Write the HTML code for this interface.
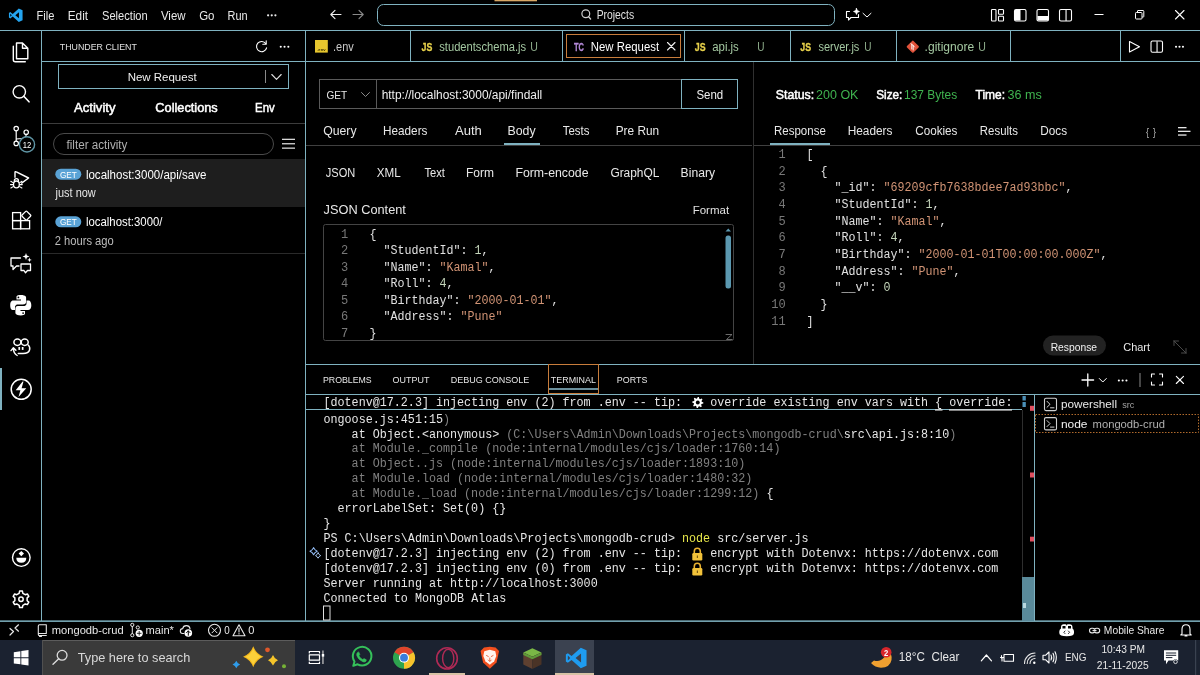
<!DOCTYPE html>
<html><head><meta charset="utf-8"><title>VS Code - Thunder Client</title>
<style>
html,body{margin:0;padding:0;background:#000;width:1200px;height:675px;overflow:hidden}
svg{display:block;will-change:transform}
.sans{font-family:"Liberation Sans",sans-serif}
.mono{font-family:"Liberation Mono",monospace}
text{white-space:pre}
</style></head><body>
<svg width="1200" height="675" viewBox="0 0 1200 675">
<rect x="0" y="0" width="1200" height="675" fill="#000"/>
<rect x="42" y="159" width="263" height="48" fill="#1e1e1e" />
<rect x="0" y="640" width="1200" height="35" fill="#1b2230" />
<rect x="42" y="640" width="253" height="35" fill="#3a3a3a" />
<rect x="42" y="640" width="253" height="1" fill="#5c5c5c" />
<rect x="42" y="640" width="1" height="35" fill="#505050" />
<rect x="555" y="640" width="39" height="35" fill="#3b4250" />
<rect x="429" y="673" width="36" height="2" fill="#d6c2a5" />
<rect x="555" y="673" width="39" height="2" fill="#d6c2a5" />
<rect x="0" y="30" width="1200" height="1" fill="#7fb2c0" />
<rect x="41" y="31" width="1" height="590" fill="#7fb2c0" />
<rect x="42" y="61" width="263" height="1" fill="#7fb2c0" />
<rect x="305" y="31" width="1" height="590" fill="#7fb2c0" />
<rect x="306" y="61" width="894" height="1" fill="#7fb2c0" />
<rect x="410" y="31" width="1" height="30" fill="#7fb2c0" />
<rect x="562" y="31" width="1" height="30" fill="#7fb2c0" />
<rect x="684" y="31" width="1" height="30" fill="#7fb2c0" />
<rect x="790" y="31" width="1" height="30" fill="#7fb2c0" />
<rect x="896" y="31" width="1" height="30" fill="#7fb2c0" />
<rect x="1010" y="31" width="1" height="30" fill="#7fb2c0" />
<rect x="1120" y="31" width="1" height="30" fill="#7fb2c0" />
<rect x="377.5" y="4.5" width="457" height="21" rx="6" fill="none" stroke="#7fb2c0" stroke-width="1" />
<rect x="0" y="620.4" width="1200" height="1.5" fill="#7fb2c0" />
<rect x="566.5" y="34.5" width="114" height="23" rx="0" fill="none" stroke="#c87d3c" stroke-width="1" />
<rect x="58.5" y="64.5" width="230" height="24" rx="0" fill="none" stroke="#7fb2c0" stroke-width="1" />
<rect x="265" y="70" width="1" height="13" fill="#8a8a8a" />
<rect x="42" y="123" width="263" height="1" fill="#3c3c3c" />
<rect x="53.5" y="133.5" width="220" height="21" rx="10.5" fill="none" stroke="#4a4a4a" stroke-width="1" />
<rect x="42" y="253" width="263" height="1" fill="#2a2a2a" />
<rect x="319.5" y="79.5" width="362" height="29" rx="0" fill="none" stroke="#5a5a5a" stroke-width="1" />
<rect x="376" y="80" width="1" height="28" fill="#5a5a5a" />
<rect x="681.5" y="79.5" width="56" height="29" rx="0" fill="none" stroke="#7fb2c0" stroke-width="1" />
<rect x="306" y="145" width="446" height="1" fill="#404040" />
<rect x="504" y="143" width="36" height="2" fill="#7fb2c0" />
<rect x="753" y="62" width="1" height="302" fill="#303030" />
<rect x="323.5" y="224.5" width="410" height="116" rx="2" fill="none" stroke="#444444" stroke-width="1" />
<rect x="725.5" y="235.5" width="5.5" height="53" fill="#5b98b0" rx="2.5"/>
<rect x="754" y="145" width="446" height="1" fill="#404040" />
<rect x="770" y="143" width="60" height="2" fill="#7fb2c0" />
<rect x="1043" y="335.5" width="63" height="20" fill="#222222" rx="10"/>
<rect x="306" y="364" width="894" height="1" fill="#7fb2c0" />
<rect x="306" y="394" width="894" height="1" fill="#7fb2c0" />
<rect x="548.5" y="364.5" width="50" height="29" rx="0" fill="none" stroke="#c87d3c" stroke-width="1" />
<rect x="549" y="388" width="49" height="2" fill="#6a8e9b" />
<rect x="306" y="409" width="716" height="1" fill="#7fb2c0" />
<rect x="1022" y="410" width="1" height="211" fill="#2e2e2e" />
<rect x="1034" y="394" width="1" height="227" fill="#7fb2c0" />
<rect x="1022" y="577" width="12" height="44" fill="#5a8a9a" />
<rect x="1035.5" y="414.5" width="163" height="18" fill="none" stroke="#b06a2c" stroke-width="1" stroke-dasharray="1.5 1.5"/>
<rect x="0" y="368" width="2" height="42" fill="#7fb2c0" />
<text x="36.59" y="19.60" font-size="12" fill="#e8e8e8" font-weight="400" class="sans" textLength="17.91" lengthAdjust="spacingAndGlyphs" >File</text>
<text x="67.78" y="19.60" font-size="12" fill="#e8e8e8" font-weight="400" class="sans" textLength="20.30" lengthAdjust="spacingAndGlyphs" >Edit</text>
<text x="102.00" y="19.60" font-size="12" fill="#e8e8e8" font-weight="400" class="sans" textLength="45.73" lengthAdjust="spacingAndGlyphs" >Selection</text>
<text x="160.95" y="19.60" font-size="12" fill="#e8e8e8" font-weight="400" class="sans" textLength="24.62" lengthAdjust="spacingAndGlyphs" >View</text>
<text x="199.17" y="19.60" font-size="12" fill="#e8e8e8" font-weight="400" class="sans" textLength="15.31" lengthAdjust="spacingAndGlyphs" >Go</text>
<text x="227.60" y="19.60" font-size="12" fill="#e8e8e8" font-weight="400" class="sans" textLength="20.11" lengthAdjust="spacingAndGlyphs" >Run</text>
<text x="596.65" y="19.20" font-size="12" fill="#e0e0e0" font-weight="400" class="sans" textLength="37.48" lengthAdjust="spacingAndGlyphs" >Projects</text>
<rect x="494.5" y="0" width="42.5" height="1.3" fill="#d9a867" />
<text x="333.00" y="50.80" font-size="12" fill="#c8c8c8" font-weight="400" class="sans" textLength="20.79" lengthAdjust="spacingAndGlyphs" >.env</text>
<text x="439.29" y="50.80" font-size="12" fill="#a4c8a1" font-weight="400" class="sans" textLength="86.81" lengthAdjust="spacingAndGlyphs" >studentschema.js</text>
<text x="530.18" y="50.80" font-size="12" fill="#8fae8c" font-weight="400" class="sans" textLength="7.63" lengthAdjust="spacingAndGlyphs" >U</text>
<text x="590.77" y="50.80" font-size="12" fill="#ffffff" font-weight="400" class="sans" textLength="68.32" lengthAdjust="spacingAndGlyphs" >New Request</text>
<text x="712.22" y="50.80" font-size="12" fill="#a4c8a1" font-weight="400" class="sans" textLength="26.60" lengthAdjust="spacingAndGlyphs" >api.js</text>
<text x="757.23" y="50.80" font-size="12" fill="#8fae8c" font-weight="400" class="sans" textLength="7.25" lengthAdjust="spacingAndGlyphs" >U</text>
<text x="818.40" y="50.80" font-size="12" fill="#a4c8a1" font-weight="400" class="sans" textLength="40.99" lengthAdjust="spacingAndGlyphs" >server.js</text>
<text x="864.23" y="50.80" font-size="12" fill="#8fae8c" font-weight="400" class="sans" textLength="7.25" lengthAdjust="spacingAndGlyphs" >U</text>
<text x="924.60" y="50.80" font-size="12" fill="#a4c8a1" font-weight="400" class="sans" textLength="49.64" lengthAdjust="spacingAndGlyphs" >.gitignore</text>
<text x="978.18" y="50.80" font-size="12" fill="#8fae8c" font-weight="400" class="sans" textLength="7.63" lengthAdjust="spacingAndGlyphs" >U</text>
<text x="59.80" y="50.10" font-size="9.8" fill="#e0e0e0" font-weight="400" class="sans" textLength="77.10" lengthAdjust="spacingAndGlyphs" >THUNDER CLIENT</text>
<text x="127.66" y="80.70" font-size="11.5" fill="#f0f0f0" font-weight="400" class="sans" textLength="68.93" lengthAdjust="spacingAndGlyphs" >New Request</text>
<text x="73.97" y="111.80" font-size="13" fill="#ffffff" font-weight="400" class="sans" textLength="41.55" lengthAdjust="spacingAndGlyphs"  stroke="#ffffff" stroke-width="0.5">Activity</text>
<text x="155.35" y="111.80" font-size="13" fill="#ffffff" font-weight="400" class="sans" textLength="62.41" lengthAdjust="spacingAndGlyphs"  stroke="#ffffff" stroke-width="0.5">Collections</text>
<text x="255.06" y="111.80" font-size="13" fill="#ffffff" font-weight="400" class="sans" textLength="19.68" lengthAdjust="spacingAndGlyphs"  stroke="#ffffff" stroke-width="0.5">Env</text>
<text x="66.53" y="148.60" font-size="12" fill="#b0b0b0" font-weight="400" class="sans" textLength="60.89" lengthAdjust="spacingAndGlyphs" >filter activity</text>
<text x="85.92" y="178.70" font-size="12" fill="#ffffff" font-weight="400" class="sans" textLength="120.39" lengthAdjust="spacingAndGlyphs" >localhost:3000/api/save</text>
<text x="55.57" y="197.00" font-size="12" fill="#e6e6e6" font-weight="400" class="sans" textLength="40.21" lengthAdjust="spacingAndGlyphs" >just now</text>
<text x="85.93" y="226.00" font-size="12" fill="#ffffff" font-weight="400" class="sans" textLength="76.57" lengthAdjust="spacingAndGlyphs" >localhost:3000/</text>
<text x="54.74" y="245.00" font-size="12" fill="#bdbdbd" font-weight="400" class="sans" textLength="59.03" lengthAdjust="spacingAndGlyphs" >2 hours ago</text>
<text x="326.49" y="99.40" font-size="11.5" fill="#e6e6e6" font-weight="400" class="sans" textLength="20.74" lengthAdjust="spacingAndGlyphs" >GET</text>
<text x="381.67" y="99.40" font-size="12" fill="#f0f0f0" font-weight="400" class="sans" textLength="160.63" lengthAdjust="spacingAndGlyphs" >http://localhost:3000/api/findall</text>
<text x="696.48" y="98.70" font-size="13" fill="#f0f0f0" font-weight="400" class="sans" textLength="26.76" lengthAdjust="spacingAndGlyphs" >Send</text>
<text x="323.17" y="135.25" font-size="13" fill="#e8e8e8" font-weight="400" class="sans" textLength="33.35" lengthAdjust="spacingAndGlyphs" >Query</text>
<text x="383.04" y="135.25" font-size="13" fill="#e8e8e8" font-weight="400" class="sans" textLength="44.39" lengthAdjust="spacingAndGlyphs" >Headers</text>
<text x="454.97" y="135.25" font-size="13" fill="#e8e8e8" font-weight="400" class="sans" textLength="26.87" lengthAdjust="spacingAndGlyphs" >Auth</text>
<text x="507.49" y="135.25" font-size="13" fill="#e8e8e8" font-weight="400" class="sans" textLength="28.14" lengthAdjust="spacingAndGlyphs" >Body</text>
<text x="562.76" y="135.25" font-size="13" fill="#e8e8e8" font-weight="400" class="sans" textLength="26.64" lengthAdjust="spacingAndGlyphs" >Tests</text>
<text x="615.73" y="135.25" font-size="13" fill="#e8e8e8" font-weight="400" class="sans" textLength="43.34" lengthAdjust="spacingAndGlyphs" >Pre Run</text>
<text x="325.83" y="177.00" font-size="12.5" fill="#e8e8e8" font-weight="400" class="sans" textLength="29.47" lengthAdjust="spacingAndGlyphs" >JSON</text>
<text x="376.74" y="177.00" font-size="12.5" fill="#e8e8e8" font-weight="400" class="sans" textLength="23.95" lengthAdjust="spacingAndGlyphs" >XML</text>
<text x="424.46" y="177.00" font-size="12.5" fill="#e8e8e8" font-weight="400" class="sans" textLength="20.51" lengthAdjust="spacingAndGlyphs" >Text</text>
<text x="465.92" y="177.00" font-size="12.5" fill="#e8e8e8" font-weight="400" class="sans" textLength="27.97" lengthAdjust="spacingAndGlyphs" >Form</text>
<text x="515.39" y="177.00" font-size="12.5" fill="#e8e8e8" font-weight="400" class="sans" textLength="73.16" lengthAdjust="spacingAndGlyphs" >Form-encode</text>
<text x="610.40" y="177.00" font-size="12.5" fill="#e8e8e8" font-weight="400" class="sans" textLength="48.99" lengthAdjust="spacingAndGlyphs" >GraphQL</text>
<text x="680.60" y="177.00" font-size="12.5" fill="#e8e8e8" font-weight="400" class="sans" textLength="34.42" lengthAdjust="spacingAndGlyphs" >Binary</text>
<text x="323.60" y="213.90" font-size="13.5" fill="#e8e8e8" font-weight="400" class="sans" textLength="82.29" lengthAdjust="spacingAndGlyphs" >JSON Content</text>
<text x="692.66" y="214.40" font-size="11" fill="#e0e0e0" font-weight="400" class="sans" textLength="36.43" lengthAdjust="spacingAndGlyphs" >Format</text>
<text x="775.74" y="99.20" font-size="12.5" fill="#ffffff" font-weight="400" class="sans" textLength="38.39" lengthAdjust="spacingAndGlyphs"  stroke="#ffffff" stroke-width="0.5">Status:</text>
<text x="816.07" y="99.20" font-size="12.5" fill="#3fb34f" font-weight="400" class="sans" textLength="42.37" lengthAdjust="spacingAndGlyphs" >200 OK</text>
<text x="876.16" y="99.20" font-size="12.5" fill="#ffffff" font-weight="400" class="sans" textLength="26.21" lengthAdjust="spacingAndGlyphs"  stroke="#ffffff" stroke-width="0.5">Size:</text>
<text x="904.09" y="99.20" font-size="12.5" fill="#3fb34f" font-weight="400" class="sans" textLength="53.04" lengthAdjust="spacingAndGlyphs" >137 Bytes</text>
<text x="975.53" y="99.20" font-size="12.5" fill="#ffffff" font-weight="400" class="sans" textLength="29.54" lengthAdjust="spacingAndGlyphs"  stroke="#ffffff" stroke-width="0.5">Time:</text>
<text x="1007.52" y="99.20" font-size="12.5" fill="#3fb34f" font-weight="400" class="sans" textLength="34.23" lengthAdjust="spacingAndGlyphs" >36 ms</text>
<text x="774.06" y="135.30" font-size="12.5" fill="#e8e8e8" font-weight="400" class="sans" textLength="51.75" lengthAdjust="spacingAndGlyphs" >Response</text>
<text x="847.73" y="135.30" font-size="12.5" fill="#e8e8e8" font-weight="400" class="sans" textLength="44.70" lengthAdjust="spacingAndGlyphs" >Headers</text>
<text x="915.21" y="135.30" font-size="12.5" fill="#e8e8e8" font-weight="400" class="sans" textLength="42.22" lengthAdjust="spacingAndGlyphs" >Cookies</text>
<text x="979.86" y="135.30" font-size="12.5" fill="#e8e8e8" font-weight="400" class="sans" textLength="38.05" lengthAdjust="spacingAndGlyphs" >Results</text>
<text x="1040.34" y="135.30" font-size="12.5" fill="#e8e8e8" font-weight="400" class="sans" textLength="26.79" lengthAdjust="spacingAndGlyphs" >Docs</text>
<text x="1050.65" y="350.80" font-size="11.8" fill="#f0f0f0" font-weight="400" class="sans" textLength="46.40" lengthAdjust="spacingAndGlyphs" >Response</text>
<text x="1123.24" y="350.80" font-size="11.8" fill="#e8e8e8" font-weight="400" class="sans" textLength="26.84" lengthAdjust="spacingAndGlyphs" >Chart</text>
<text x="348.3" y="237.50" font-size="12" fill="#787878" class="mono" text-anchor="end">1</text>
<text x="369.40" y="237.50" font-size="12" fill="#e0e0e0" class="mono" textLength="7.00" lengthAdjust="spacingAndGlyphs">{</text>
<text x="348.3" y="254.05" font-size="12" fill="#787878" class="mono" text-anchor="end">2</text>
<text x="383.40" y="254.05" font-size="12" fill="#e0e0e0" class="mono" textLength="77.00" lengthAdjust="spacingAndGlyphs">"StudentId"</text>
<text x="460.40" y="254.05" font-size="12" fill="#e0e0e0" class="mono" textLength="7.00" lengthAdjust="spacingAndGlyphs">:</text>
<text x="474.40" y="254.05" font-size="12" fill="#c5d6bb" class="mono" textLength="7.00" lengthAdjust="spacingAndGlyphs">1</text>
<text x="481.40" y="254.05" font-size="12" fill="#e0e0e0" class="mono" textLength="7.00" lengthAdjust="spacingAndGlyphs">,</text>
<text x="348.3" y="270.60" font-size="12" fill="#787878" class="mono" text-anchor="end">3</text>
<text x="383.40" y="270.60" font-size="12" fill="#e0e0e0" class="mono" textLength="42.00" lengthAdjust="spacingAndGlyphs">"Name"</text>
<text x="425.40" y="270.60" font-size="12" fill="#e0e0e0" class="mono" textLength="7.00" lengthAdjust="spacingAndGlyphs">:</text>
<text x="439.40" y="270.60" font-size="12" fill="#d29475" class="mono" textLength="49.00" lengthAdjust="spacingAndGlyphs">"Kamal"</text>
<text x="488.40" y="270.60" font-size="12" fill="#e0e0e0" class="mono" textLength="7.00" lengthAdjust="spacingAndGlyphs">,</text>
<text x="348.3" y="287.15" font-size="12" fill="#787878" class="mono" text-anchor="end">4</text>
<text x="383.40" y="287.15" font-size="12" fill="#e0e0e0" class="mono" textLength="42.00" lengthAdjust="spacingAndGlyphs">"Roll"</text>
<text x="425.40" y="287.15" font-size="12" fill="#e0e0e0" class="mono" textLength="7.00" lengthAdjust="spacingAndGlyphs">:</text>
<text x="439.40" y="287.15" font-size="12" fill="#c5d6bb" class="mono" textLength="7.00" lengthAdjust="spacingAndGlyphs">4</text>
<text x="446.40" y="287.15" font-size="12" fill="#e0e0e0" class="mono" textLength="7.00" lengthAdjust="spacingAndGlyphs">,</text>
<text x="348.3" y="303.70" font-size="12" fill="#787878" class="mono" text-anchor="end">5</text>
<text x="383.40" y="303.70" font-size="12" fill="#e0e0e0" class="mono" textLength="70.00" lengthAdjust="spacingAndGlyphs">"Birthday"</text>
<text x="453.40" y="303.70" font-size="12" fill="#e0e0e0" class="mono" textLength="7.00" lengthAdjust="spacingAndGlyphs">:</text>
<text x="467.40" y="303.70" font-size="12" fill="#d29475" class="mono" textLength="84.00" lengthAdjust="spacingAndGlyphs">"2000-01-01"</text>
<text x="551.40" y="303.70" font-size="12" fill="#e0e0e0" class="mono" textLength="7.00" lengthAdjust="spacingAndGlyphs">,</text>
<text x="348.3" y="320.25" font-size="12" fill="#787878" class="mono" text-anchor="end">6</text>
<text x="383.40" y="320.25" font-size="12" fill="#e0e0e0" class="mono" textLength="63.00" lengthAdjust="spacingAndGlyphs">"Address"</text>
<text x="446.40" y="320.25" font-size="12" fill="#e0e0e0" class="mono" textLength="7.00" lengthAdjust="spacingAndGlyphs">:</text>
<text x="460.40" y="320.25" font-size="12" fill="#d29475" class="mono" textLength="42.00" lengthAdjust="spacingAndGlyphs">"Pune"</text>
<text x="348.3" y="336.80" font-size="12" fill="#787878" class="mono" text-anchor="end">7</text>
<text x="369.40" y="336.80" font-size="12" fill="#e0e0e0" class="mono" textLength="7.00" lengthAdjust="spacingAndGlyphs">}</text>
<text x="785.7" y="158.00" font-size="12" fill="#787878" class="mono" text-anchor="end">1</text>
<text x="806.50" y="158.00" font-size="12" fill="#e0e0e0" class="mono" textLength="7.00" lengthAdjust="spacingAndGlyphs">[</text>
<text x="785.7" y="174.67" font-size="12" fill="#787878" class="mono" text-anchor="end">2</text>
<text x="820.50" y="174.67" font-size="12" fill="#e0e0e0" class="mono" textLength="7.00" lengthAdjust="spacingAndGlyphs">{</text>
<text x="785.7" y="191.34" font-size="12" fill="#787878" class="mono" text-anchor="end">3</text>
<text x="834.50" y="191.34" font-size="12" fill="#e0e0e0" class="mono" textLength="35.00" lengthAdjust="spacingAndGlyphs">"_id"</text>
<text x="869.50" y="191.34" font-size="12" fill="#e0e0e0" class="mono" textLength="7.00" lengthAdjust="spacingAndGlyphs">:</text>
<text x="883.50" y="191.34" font-size="12" fill="#d29475" class="mono" textLength="182.00" lengthAdjust="spacingAndGlyphs">"69209cfb7638bdee7ad93bbc"</text>
<text x="1065.50" y="191.34" font-size="12" fill="#e0e0e0" class="mono" textLength="7.00" lengthAdjust="spacingAndGlyphs">,</text>
<text x="785.7" y="208.01" font-size="12" fill="#787878" class="mono" text-anchor="end">4</text>
<text x="834.50" y="208.01" font-size="12" fill="#e0e0e0" class="mono" textLength="77.00" lengthAdjust="spacingAndGlyphs">"StudentId"</text>
<text x="911.50" y="208.01" font-size="12" fill="#e0e0e0" class="mono" textLength="7.00" lengthAdjust="spacingAndGlyphs">:</text>
<text x="925.50" y="208.01" font-size="12" fill="#c5d6bb" class="mono" textLength="7.00" lengthAdjust="spacingAndGlyphs">1</text>
<text x="932.50" y="208.01" font-size="12" fill="#e0e0e0" class="mono" textLength="7.00" lengthAdjust="spacingAndGlyphs">,</text>
<text x="785.7" y="224.68" font-size="12" fill="#787878" class="mono" text-anchor="end">5</text>
<text x="834.50" y="224.68" font-size="12" fill="#e0e0e0" class="mono" textLength="42.00" lengthAdjust="spacingAndGlyphs">"Name"</text>
<text x="876.50" y="224.68" font-size="12" fill="#e0e0e0" class="mono" textLength="7.00" lengthAdjust="spacingAndGlyphs">:</text>
<text x="890.50" y="224.68" font-size="12" fill="#d29475" class="mono" textLength="49.00" lengthAdjust="spacingAndGlyphs">"Kamal"</text>
<text x="939.50" y="224.68" font-size="12" fill="#e0e0e0" class="mono" textLength="7.00" lengthAdjust="spacingAndGlyphs">,</text>
<text x="785.7" y="241.35" font-size="12" fill="#787878" class="mono" text-anchor="end">6</text>
<text x="834.50" y="241.35" font-size="12" fill="#e0e0e0" class="mono" textLength="42.00" lengthAdjust="spacingAndGlyphs">"Roll"</text>
<text x="876.50" y="241.35" font-size="12" fill="#e0e0e0" class="mono" textLength="7.00" lengthAdjust="spacingAndGlyphs">:</text>
<text x="890.50" y="241.35" font-size="12" fill="#c5d6bb" class="mono" textLength="7.00" lengthAdjust="spacingAndGlyphs">4</text>
<text x="897.50" y="241.35" font-size="12" fill="#e0e0e0" class="mono" textLength="7.00" lengthAdjust="spacingAndGlyphs">,</text>
<text x="785.7" y="258.02" font-size="12" fill="#787878" class="mono" text-anchor="end">7</text>
<text x="834.50" y="258.02" font-size="12" fill="#e0e0e0" class="mono" textLength="70.00" lengthAdjust="spacingAndGlyphs">"Birthday"</text>
<text x="904.50" y="258.02" font-size="12" fill="#e0e0e0" class="mono" textLength="7.00" lengthAdjust="spacingAndGlyphs">:</text>
<text x="918.50" y="258.02" font-size="12" fill="#d29475" class="mono" textLength="182.00" lengthAdjust="spacingAndGlyphs">"2000-01-01T00:00:00.000Z"</text>
<text x="1100.50" y="258.02" font-size="12" fill="#e0e0e0" class="mono" textLength="7.00" lengthAdjust="spacingAndGlyphs">,</text>
<text x="785.7" y="274.69" font-size="12" fill="#787878" class="mono" text-anchor="end">8</text>
<text x="834.50" y="274.69" font-size="12" fill="#e0e0e0" class="mono" textLength="63.00" lengthAdjust="spacingAndGlyphs">"Address"</text>
<text x="897.50" y="274.69" font-size="12" fill="#e0e0e0" class="mono" textLength="7.00" lengthAdjust="spacingAndGlyphs">:</text>
<text x="911.50" y="274.69" font-size="12" fill="#d29475" class="mono" textLength="42.00" lengthAdjust="spacingAndGlyphs">"Pune"</text>
<text x="953.50" y="274.69" font-size="12" fill="#e0e0e0" class="mono" textLength="7.00" lengthAdjust="spacingAndGlyphs">,</text>
<text x="785.7" y="291.36" font-size="12" fill="#787878" class="mono" text-anchor="end">9</text>
<text x="834.50" y="291.36" font-size="12" fill="#e0e0e0" class="mono" textLength="35.00" lengthAdjust="spacingAndGlyphs">"__v"</text>
<text x="869.50" y="291.36" font-size="12" fill="#e0e0e0" class="mono" textLength="7.00" lengthAdjust="spacingAndGlyphs">:</text>
<text x="883.50" y="291.36" font-size="12" fill="#c5d6bb" class="mono" textLength="7.00" lengthAdjust="spacingAndGlyphs">0</text>
<text x="785.7" y="308.03" font-size="12" fill="#787878" class="mono" text-anchor="end">10</text>
<text x="820.50" y="308.03" font-size="12" fill="#e0e0e0" class="mono" textLength="7.00" lengthAdjust="spacingAndGlyphs">}</text>
<text x="785.7" y="324.70" font-size="12" fill="#787878" class="mono" text-anchor="end">11</text>
<text x="806.50" y="324.70" font-size="12" fill="#e0e0e0" class="mono" textLength="7.00" lengthAdjust="spacingAndGlyphs">]</text>
<text x="322.98" y="383.00" font-size="9.8" fill="#e6e6e6" font-weight="400" class="sans" textLength="48.72" lengthAdjust="spacingAndGlyphs" >PROBLEMS</text>
<text x="392.58" y="383.00" font-size="9.8" fill="#e6e6e6" font-weight="400" class="sans" textLength="36.83" lengthAdjust="spacingAndGlyphs" >OUTPUT</text>
<text x="450.86" y="383.00" font-size="9.8" fill="#e6e6e6" font-weight="400" class="sans" textLength="78.53" lengthAdjust="spacingAndGlyphs" >DEBUG CONSOLE</text>
<text x="550.80" y="383.00" font-size="9.8" fill="#e6e6e6" font-weight="400" class="sans" textLength="45.10" lengthAdjust="spacingAndGlyphs" >TERMINAL</text>
<text x="616.87" y="383.00" font-size="9.8" fill="#e6e6e6" font-weight="400" class="sans" textLength="30.53" lengthAdjust="spacingAndGlyphs" >PORTS</text>
<text x="323.50" y="406.00" font-size="12" fill="#e6e6e6" class="mono" textLength="358.53" lengthAdjust="spacingAndGlyphs">[dotenv@17.2.3] injecting env (2) from .env -- tip:</text>
<text x="710.15" y="406.00" font-size="12" fill="#e6e6e6" class="mono" textLength="302.29" lengthAdjust="spacingAndGlyphs">override existing env vars with { override:</text>
<rect x="935" y="409.2" width="7.5" height="1.4" fill="#d8d8d8" />
<rect x="949" y="409.2" width="63" height="1.4" fill="#d8d8d8" />
<text x="323.50" y="422.60" font-size="12" fill="#e6e6e6" class="mono" textLength="119.51" lengthAdjust="spacingAndGlyphs">ongoose.js:451:15</text>
<text x="443.01" y="422.60" font-size="12" fill="#808080" class="mono" textLength="7.03" lengthAdjust="spacingAndGlyphs">)</text>
<text x="351.62" y="437.52" font-size="12" fill="#e6e6e6" class="mono" textLength="147.63" lengthAdjust="spacingAndGlyphs">at Object.&lt;anonymous&gt;</text>
<text x="506.28" y="437.52" font-size="12" fill="#808080" class="mono" textLength="337.44" lengthAdjust="spacingAndGlyphs">(C:\Users\Admin\Downloads\Projects\mongodb-crud\</text>
<text x="843.72" y="437.52" font-size="12" fill="#e6e6e6" class="mono" textLength="105.45" lengthAdjust="spacingAndGlyphs">src\api.js:8:10</text>
<text x="949.17" y="437.52" font-size="12" fill="#808080" class="mono" textLength="7.03" lengthAdjust="spacingAndGlyphs">)</text>
<text x="351.62" y="452.44" font-size="12" fill="#808080" class="mono" textLength="428.83" lengthAdjust="spacingAndGlyphs">at Module._compile (node:internal/modules/cjs/loader:1760:14)</text>
<text x="351.62" y="467.36" font-size="12" fill="#808080" class="mono" textLength="393.68" lengthAdjust="spacingAndGlyphs">at Object..js (node:internal/modules/cjs/loader:1893:10)</text>
<text x="351.62" y="482.28" font-size="12" fill="#808080" class="mono" textLength="400.71" lengthAdjust="spacingAndGlyphs">at Module.load (node:internal/modules/cjs/loader:1480:32)</text>
<text x="351.62" y="497.20" font-size="12" fill="#808080" class="mono" textLength="407.74" lengthAdjust="spacingAndGlyphs">at Module._load (node:internal/modules/cjs/loader:1299:12)</text>
<text x="766.39" y="497.20" font-size="12" fill="#e6e6e6" class="mono" textLength="7.03" lengthAdjust="spacingAndGlyphs">{</text>
<text x="337.56" y="512.12" font-size="12" fill="#e6e6e6" class="mono" textLength="168.72" lengthAdjust="spacingAndGlyphs">errorLabelSet: Set(0) {}</text>
<text x="323.50" y="527.04" font-size="12" fill="#e6e6e6" class="mono" textLength="7.03" lengthAdjust="spacingAndGlyphs">}</text>
<text x="323.50" y="541.96" font-size="12" fill="#e6e6e6" class="mono" textLength="351.50" lengthAdjust="spacingAndGlyphs">PS C:\Users\Admin\Downloads\Projects\mongodb-crud&gt;</text>
<text x="682.03" y="541.96" font-size="12" fill="#e8e84a" class="mono" textLength="28.12" lengthAdjust="spacingAndGlyphs">node</text>
<text x="717.18" y="541.96" font-size="12" fill="#e6e6e6" class="mono" textLength="91.39" lengthAdjust="spacingAndGlyphs">src/server.js</text>
<text x="323.50" y="556.88" font-size="12" fill="#e6e6e6" class="mono" textLength="358.53" lengthAdjust="spacingAndGlyphs">[dotenv@17.2.3] injecting env (2) from .env -- tip:</text>
<text x="710.15" y="556.88" font-size="12" fill="#e6e6e6" class="mono" textLength="288.23" lengthAdjust="spacingAndGlyphs">encrypt with Dotenvx: https://dotenvx.com</text>
<text x="323.50" y="571.80" font-size="12" fill="#e6e6e6" class="mono" textLength="358.53" lengthAdjust="spacingAndGlyphs">[dotenv@17.2.3] injecting env (0) from .env -- tip:</text>
<text x="710.15" y="571.80" font-size="12" fill="#e6e6e6" class="mono" textLength="288.23" lengthAdjust="spacingAndGlyphs">encrypt with Dotenvx: https://dotenvx.com</text>
<text x="323.50" y="586.72" font-size="12" fill="#e6e6e6" class="mono" textLength="274.17" lengthAdjust="spacingAndGlyphs">Server running at http://localhost:3000</text>
<text x="323.50" y="601.64" font-size="12" fill="#e6e6e6" class="mono" textLength="182.78" lengthAdjust="spacingAndGlyphs">Connected to MongoDB Atlas</text>
<rect x="323.5" y="606" width="6.5" height="14" rx="0" fill="none" stroke="#e0e0e0" stroke-width="1" />
<text x="1060.94" y="408.30" font-size="11.5" fill="#e8e8e8" font-weight="400" class="sans" textLength="56.14" lengthAdjust="spacingAndGlyphs" >powershell</text>
<text x="1122.25" y="408.30" font-size="9.5" fill="#a0a0a0" font-weight="400" class="sans" textLength="12.20" lengthAdjust="spacingAndGlyphs" >src</text>
<text x="1060.91" y="427.60" font-size="11.5" fill="#f0f0f0" font-weight="400" class="sans" textLength="26.63" lengthAdjust="spacingAndGlyphs" >node</text>
<text x="1092.55" y="427.60" font-size="10.5" fill="#b0b0b0" font-weight="400" class="sans" textLength="72.37" lengthAdjust="spacingAndGlyphs" >mongodb-crud</text>
<text x="51.76" y="633.75" font-size="10.5" fill="#e8e8e8" font-weight="400" class="sans" textLength="71.96" lengthAdjust="spacingAndGlyphs" >mongodb-crud</text>
<text x="145.51" y="633.75" font-size="10.5" fill="#e8e8e8" font-weight="400" class="sans" textLength="28.41" lengthAdjust="spacingAndGlyphs" >main*</text>
<text x="224.37" y="633.75" font-size="10.5" fill="#e8e8e8" font-weight="400" class="sans" textLength="5.47" lengthAdjust="spacingAndGlyphs" >0</text>
<text x="248.32" y="633.75" font-size="10.5" fill="#e8e8e8" font-weight="400" class="sans" textLength="6.17" lengthAdjust="spacingAndGlyphs" >0</text>
<text x="1103.86" y="633.70" font-size="10.8" fill="#e8e8e8" font-weight="400" class="sans" textLength="60.60" lengthAdjust="spacingAndGlyphs" >Mobile Share</text>
<text x="77.72" y="661.75" font-size="12.7" fill="#d8d8d8" font-weight="400" class="sans" textLength="112.51" lengthAdjust="spacingAndGlyphs" >Type here to search</text>
<text x="898.81" y="661.40" font-size="12.3" fill="#e8e8e8" font-weight="400" class="sans" textLength="26.03" lengthAdjust="spacingAndGlyphs" >18°C</text>
<text x="931.61" y="661.40" font-size="12.3" fill="#e8e8e8" font-weight="400" class="sans" textLength="27.78" lengthAdjust="spacingAndGlyphs" >Clear</text>
<text x="1064.88" y="660.80" font-size="10.8" fill="#e8e8e8" font-weight="400" class="sans" textLength="21.56" lengthAdjust="spacingAndGlyphs" >ENG</text>
<text x="1101.43" y="653.00" font-size="10.9" fill="#e8e8e8" font-weight="400" class="sans" textLength="43.51" lengthAdjust="spacingAndGlyphs" >10:43 PM</text>
<text x="1096.69" y="668.70" font-size="10.9" fill="#e8e8e8" font-weight="400" class="sans" textLength="51.94" lengthAdjust="spacingAndGlyphs" >21-11-2025</text>
<circle cx="268.1" cy="15.3" r="1.1" fill="#e8e8e8" stroke="none" stroke-width="1"/>
<circle cx="271.75" cy="15.3" r="1.1" fill="#e8e8e8" stroke="none" stroke-width="1"/>
<circle cx="275.40000000000003" cy="15.3" r="1.1" fill="#e8e8e8" stroke="none" stroke-width="1"/>
<g transform="translate(8.5,8) scale(0.145)"><path fill="#24a4ef" fill-rule="evenodd" d="M71 3 L97 15 V85 L71 97 L29 59 L12 72 L3 66 V34 L12 28 L29 41 Z M72 29 L47 50 L72 71 Z M12 39 V61 L23 50 Z"/></g>
<path d="M341 14.5 H330.8 M335 10.3 L330.8 14.5 L335 18.7" fill="none" stroke="#f0f0f0" stroke-width="1.1" stroke-linecap="round" stroke-linejoin="round" />
<path d="M353 14.5 H363.2 M359 10.3 L363.2 14.5 L359 18.7" fill="none" stroke="#8a8a8a" stroke-width="1.1" stroke-linecap="round" stroke-linejoin="round" />
<circle cx="585.8" cy="13.8" r="3.9" fill="none" stroke="#d0d0d0" stroke-width="1.2"/>
<path d="M588.6 16.8 L590.6 19" fill="none" stroke="#d0d0d0" stroke-width="1.3" stroke-linecap="round" stroke-linejoin="round" />
<path d="M849.5 11.5 H846.5 V17.5 H848.5 V20 L851 17.5 H858.5 V14.5" fill="none" stroke="#ffffff" stroke-width="1.1" stroke-linecap="round" stroke-linejoin="round" />
<path d="M856.5 8.6 L857.3 10.7 L859.4 11.5 L857.3 12.3 L856.5 14.4 L855.7 12.3 L853.6 11.5 L855.7 10.7 Z" fill="#ffffff" stroke="#ffffff" stroke-width="0.9" stroke-linecap="round" stroke-linejoin="round" />
<path d="M863 13.3 L867 17 L871 13.3" fill="none" stroke="#ffffff" stroke-width="1.0" stroke-linecap="round" stroke-linejoin="round" />
<rect x="991.5" y="9.5" width="4.5" height="11.5" rx="0.8" fill="none" stroke="#ffffff" stroke-width="1.1" />
<rect x="998.5" y="9.5" width="5" height="4.8" rx="0.8" fill="none" stroke="#ffffff" stroke-width="1.1" />
<rect x="998.5" y="16.2" width="5" height="4.8" rx="0.8" fill="none" stroke="#ffffff" stroke-width="1.1" />
<rect x="1014.5" y="9.5" width="11.5" height="11.5" rx="1.5" fill="none" stroke="#ffffff" stroke-width="1.1" />
<rect x="1015" y="10" width="5.5" height="10.5" fill="#ffffff" />
<rect x="1037" y="9.5" width="11.5" height="11.5" rx="1.5" fill="none" stroke="#ffffff" stroke-width="1.1" />
<rect x="1037.5" y="16" width="10.5" height="4.5" fill="#ffffff" />
<rect x="1059.5" y="9.5" width="12" height="11.5" rx="1.5" fill="none" stroke="#ffffff" stroke-width="1.1" />
<rect x="1065.5" y="10" width="1.1" height="11" fill="#ffffff" />
<rect x="1094.5" y="14" width="9.0" height="1" fill="#ffffff" />
<rect x="1135.5" y="12.5" width="6.5" height="6.5" rx="0.8" fill="none" stroke="#ffffff" stroke-width="1" />
<path d="M1137.5 12 V11 Q1137.5 10.5 1138 10.5 H1143 Q1143.8 10.5 1143.8 11.3 V16.5 Q1143.8 17 1143.3 17 H1142.5" fill="none" stroke="#ffffff" stroke-width="1" stroke-linecap="round" stroke-linejoin="round" />
<path d="M1175.5 10.5 L1184 19 M1184 10.5 L1175.5 19" fill="none" stroke="#ffffff" stroke-width="1.1" stroke-linecap="round" stroke-linejoin="round" />
<rect x="315" y="40" width="12.8" height="12.6" fill="#e6c62e" />
<text x="317.2" y="51.2" font-size="4.2" fill="#3a3000" class="sans" font-weight="700">.env</text>
<text x="421.57" y="50.50" font-size="10.6" fill="#e5cf4a" font-weight="700" class="sans" textLength="10.78" lengthAdjust="spacingAndGlyphs"  stroke="#e5cf4a" stroke-width="0.3">JS</text>
<text x="694.87" y="50.50" font-size="10.6" fill="#e5cf4a" font-weight="700" class="sans" textLength="10.78" lengthAdjust="spacingAndGlyphs"  stroke="#e5cf4a" stroke-width="0.3">JS</text>
<text x="800.27" y="50.50" font-size="10.6" fill="#e5cf4a" font-weight="700" class="sans" textLength="10.78" lengthAdjust="spacingAndGlyphs"  stroke="#e5cf4a" stroke-width="0.3">JS</text>
<text x="573.92" y="50.50" font-size="10.6" fill="#b48ad8" font-weight="700" class="sans" textLength="9.99" lengthAdjust="spacingAndGlyphs"  stroke="#b48ad8" stroke-width="0.3">TC</text>
<path d="M667.5 42.5 L675 50 M675 42.5 L667.5 50" fill="none" stroke="#f0f0f0" stroke-width="1.1" stroke-linecap="round" stroke-linejoin="round" />
<g transform="translate(912.8,46.7) rotate(45)"><rect x="-4.6" y="-4.6" width="9.2" height="9.2" rx="1" fill="#e0523a"/></g>
<path d="M911 43.5 L914.5 47 M913.2 45.5 V50 M911.8 44.3 V49" fill="none" stroke="#ffffff" stroke-width="0.9" stroke-linecap="round" stroke-linejoin="round" />
<path d="M1129.5 41.5 V52 L1139.5 46.7 Z" fill="none" stroke="#ffffff" stroke-width="1.1" stroke-linecap="round" stroke-linejoin="round" />
<rect x="1151" y="41" width="11.5" height="11.2" rx="1.5" fill="none" stroke="#ffffff" stroke-width="1.1" />
<rect x="1156.5" y="41.3" width="1.1" height="10.700000000000003" fill="#ffffff" />
<circle cx="1176.05" cy="46.7" r="1.05" fill="#ffffff" stroke="none" stroke-width="1"/>
<circle cx="1179.5" cy="46.7" r="1.05" fill="#ffffff" stroke="none" stroke-width="1"/>
<circle cx="1182.95" cy="46.7" r="1.05" fill="#ffffff" stroke="none" stroke-width="1"/>
<path d="M265.8 43.6 A5.1 5.1 0 1 0 266.6 47.8" fill="none" stroke="#ffffff" stroke-width="1.1" stroke-linecap="round" stroke-linejoin="round" />
<path d="M266.2 40.8 V44.2 H262.8" fill="none" stroke="#ffffff" stroke-width="1.1" stroke-linecap="round" stroke-linejoin="round" />
<circle cx="280.75" cy="46.8" r="1.05" fill="#ffffff" stroke="none" stroke-width="1"/>
<circle cx="284.55" cy="46.8" r="1.05" fill="#ffffff" stroke="none" stroke-width="1"/>
<circle cx="288.34999999999997" cy="46.8" r="1.05" fill="#ffffff" stroke="none" stroke-width="1"/>
<path d="M271.8 74.5 L276.5 79.3 L281.2 74.5" fill="none" stroke="#e0e0e0" stroke-width="1.1" stroke-linecap="round" stroke-linejoin="round" />
<rect x="282" y="138.70000000000002" width="13" height="1.3" fill="#d8d8d8" />
<rect x="282" y="143.1" width="13" height="1.3" fill="#d8d8d8" />
<rect x="282" y="147.5" width="13" height="1.3" fill="#d8d8d8" />
<rect x="55.3" y="168.7" width="26" height="11" fill="#5aa3d6" rx="5.5"/>
<text x="59.89" y="177.60" font-size="9" fill="#ffffff" font-weight="400" class="sans" textLength="16.80" lengthAdjust="spacingAndGlyphs" >GET</text>
<rect x="55.3" y="216.3" width="26" height="11" fill="#5aa3d6" rx="5.5"/>
<text x="59.89" y="225.20" font-size="9" fill="#ffffff" font-weight="400" class="sans" textLength="16.80" lengthAdjust="spacingAndGlyphs" >GET</text>
<path d="M361.5 92.5 L365.5 96.5 L369.5 92.5" fill="none" stroke="#8a8a8a" stroke-width="1.0" stroke-linecap="round" stroke-linejoin="round" />
<text x="1145.76" y="136.00" font-size="11" fill="#e0e0e0" font-weight="400" class="mono" textLength="10.38" lengthAdjust="spacingAndGlyphs" >{ }</text>
<rect x="1178" y="127" width="8.5" height="1.3" fill="#e6e6e6" />
<rect x="1178" y="130.7" width="12.5" height="1.3" fill="#e6e6e6" />
<rect x="1178" y="134.4" width="8.5" height="1.3" fill="#e6e6e6" />
<path d="M1174 341 L1186 353 M1174 341 V345.5 M1174 341 H1178.5 M1186 353 V348.5 M1186 353 H1181.5" fill="none" stroke="#4a4a4a" stroke-width="1.0" stroke-linecap="round" stroke-linejoin="round" />
<path d="M725.5 231.5 L728.3 228.5 L731 231.5 Z" fill="#5b98b0" />
<path d="M726 334.5 H732 L726.5 339.5 H732" fill="none" stroke="#777" stroke-width="0.9" stroke-linecap="round" stroke-linejoin="round" />
<path d="M1087.8 374 V386 M1082 380 H1093.6" fill="none" stroke="#ffffff" stroke-width="1.3" stroke-linecap="round" stroke-linejoin="round" />
<path d="M1099.3 378.5 L1102.8 382 L1106.3 378.5" fill="none" stroke="#ffffff" stroke-width="1.0" stroke-linecap="round" stroke-linejoin="round" />
<circle cx="1118.85" cy="380.5" r="1.05" fill="#ffffff" stroke="none" stroke-width="1"/>
<circle cx="1122.6499999999999" cy="380.5" r="1.05" fill="#ffffff" stroke="none" stroke-width="1"/>
<circle cx="1126.45" cy="380.5" r="1.05" fill="#ffffff" stroke="none" stroke-width="1"/>
<rect x="1139.5" y="373" width="1" height="14" fill="#8a8a8a" />
<path d="M1151.5 377 V374 H1154.5 M1159.5 374 H1162.5 V377 M1162.5 382 V385 H1159.5 M1154.5 385 H1151.5 V382" fill="none" stroke="#ffffff" stroke-width="1.1" stroke-linecap="round" stroke-linejoin="round" />
<path d="M1176.3 376.3 L1183.5 383.5 M1183.5 376.3 L1176.3 383.5" fill="none" stroke="#ffffff" stroke-width="1.1" stroke-linecap="round" stroke-linejoin="round" />
<polygon points="703.40,402.50 703.29,403.59 701.53,404.04 701.15,404.74 701.76,406.46 700.91,407.16 699.34,406.23 698.59,406.45 697.80,408.10 696.71,407.99 696.26,406.23 695.56,405.85 693.84,406.46 693.14,405.61 694.07,404.04 693.85,403.29 692.20,402.50 692.31,401.41 694.07,400.96 694.45,400.26 693.84,398.54 694.69,397.84 696.26,398.77 697.01,398.55 697.80,396.90 698.89,397.01 699.34,398.77 700.04,399.15 701.76,398.54 702.46,399.39 701.53,400.96 701.75,401.71" fill="#ffffff"/>
<circle cx="697.8" cy="402.5" r="1.9599999999999997" fill="#000" stroke="none" stroke-width="1"/>
<path d="M694.3 553.5 V551.3 A3 3 0 0 1 700.3 551.3 V553.5" fill="none" stroke="#e8b030" stroke-width="1.6" stroke-linecap="round" stroke-linejoin="round" />
<rect x="692.3" y="553.0" width="10" height="7.5" fill="#f2c23a" rx="1.2"/>
<rect x="696.8" y="555.5" width="1.2" height="2.5" fill="#7a5a10" />
<path d="M694.3 568.5 V566.3 A3 3 0 0 1 700.3 566.3 V568.5" fill="none" stroke="#e8b030" stroke-width="1.6" stroke-linecap="round" stroke-linejoin="round" />
<rect x="692.3" y="568.0" width="10" height="7.5" fill="#f2c23a" rx="1.2"/>
<rect x="696.8" y="570.5" width="1.2" height="2.5" fill="#7a5a10" />
<path d="M313.6 547.6 Q314.68 550.12 317.20000000000005 551.2 Q314.68 552.2800000000001 313.6 554.8000000000001 Q312.52000000000004 552.2800000000001 310.0 551.2 Q312.52000000000004 550.12 313.6 547.6 Z" fill="none" stroke="#8fb8f0" stroke-width="1.1" stroke-linecap="round" stroke-linejoin="round" />
<path d="M318.1 553.0 Q318.88 554.82 320.70000000000005 555.6 Q318.88 556.38 318.1 558.2 Q317.32000000000005 556.38 315.5 555.6 Q317.32000000000005 554.82 318.1 553.0 Z" fill="none" stroke="#a8c8f0" stroke-width="1.0" stroke-linecap="round" stroke-linejoin="round" />
<rect x="1044.5" y="398.3" width="12" height="12.3" rx="1.5" fill="none" stroke="#d0d0d0" stroke-width="1.1" />
<path d="M1047 401.3 L1050 404.3 L1047 407.3 M1050.5 407.8 H1054" fill="none" stroke="#d0d0d0" stroke-width="1.0" stroke-linecap="round" stroke-linejoin="round" />
<rect x="1044.5" y="417.6" width="12" height="12.3" rx="1.5" fill="none" stroke="#d0d0d0" stroke-width="1.1" />
<path d="M1047 420.6 L1050 423.6 L1047 426.6 M1050.5 427.1 H1054" fill="none" stroke="#d0d0d0" stroke-width="1.0" stroke-linecap="round" stroke-linejoin="round" />
<rect x="1030" y="405.8" width="4" height="5.0" fill="#e05060" />
<rect x="1030" y="472.5" width="4" height="5.0" fill="#e05060" />
<rect x="1030" y="536.7" width="4" height="4.7999999999999545" fill="#e05060" />
<rect x="1022.5" y="396" width="3.3" height="4.5" fill="#4a90b8" />
<rect x="1022.5" y="402" width="3.3" height="5" fill="#4a90b8" />
<rect x="1023" y="603" width="3" height="5" fill="#b8d8e0" />
<path d="M16.5 43 H22.5 L27.8 48.3 V58.7 H16.5 Z M22.5 43 V48.3 H27.8" fill="none" stroke="#ffffff" stroke-width="1.4" stroke-linecap="round" stroke-linejoin="round" />
<path d="M13.3 46.3 V59.8 Q13.3 61.8 15.3 61.8 H25.3" fill="none" stroke="#ffffff" stroke-width="1.4" stroke-linecap="round" stroke-linejoin="round" />
<circle cx="19.3" cy="91.8" r="6.2" fill="none" stroke="#ffffff" stroke-width="1.4"/>
<path d="M23.8 96.3 L29 101.8" fill="none" stroke="#ffffff" stroke-width="1.6" stroke-linecap="round" stroke-linejoin="round" />
<circle cx="16.2" cy="128.6" r="2.2" fill="none" stroke="#ffffff" stroke-width="1.2"/>
<circle cx="26.2" cy="132.2" r="2.2" fill="none" stroke="#ffffff" stroke-width="1.2"/>
<circle cx="16.2" cy="143.4" r="2.2" fill="none" stroke="#ffffff" stroke-width="1.2"/>
<path d="M16.2 130.8 V141.2 M26.2 134.4 Q26.2 138 22 138.5 L16.4 139" fill="none" stroke="#ffffff" stroke-width="1.2" stroke-linecap="round" stroke-linejoin="round" />
<circle cx="27" cy="144.4" r="7.6" fill="#000" stroke="#5f95a5" stroke-width="1.4"/>
<text x="22.71" y="147.80" font-size="9" fill="#ffffff" font-weight="400" class="sans" textLength="8.57" lengthAdjust="spacingAndGlyphs" >12</text>
<path d="M15 177.3 V172.6 Q15 171.2 16.3 171.9 L28.6 178 L21.6 183.1" fill="none" stroke="#ffffff" stroke-width="1.4" stroke-linecap="round" stroke-linejoin="round" />
<path d="M14.3 180.8 A2.1 2.1 0 0 1 18.5 180.8" fill="none" stroke="#ffffff" stroke-width="1.2" stroke-linecap="round" stroke-linejoin="round" />
<ellipse cx="16.4" cy="184.4" rx="2.9" ry="3.4" fill="none" stroke="#fff" stroke-width="1.3"/>
<path d="M10.8 181.3 L13 182.6 M10.5 184.6 H13.2 M10.9 188 L13.2 186.6 M22 181.3 L19.8 182.6 M22.3 184.6 H19.6 M21.9 188 L19.6 186.6" fill="none" stroke="#ffffff" stroke-width="1.1" stroke-linecap="round" stroke-linejoin="round" />
<rect x="12.6" y="212.6" width="8" height="8" rx="0" fill="none" stroke="#ffffff" stroke-width="1.3" />
<rect x="12.6" y="220.6" width="8" height="8.2" rx="0" fill="none" stroke="#ffffff" stroke-width="1.3" />
<rect x="20.6" y="220.6" width="9" height="8.2" rx="0" fill="none" stroke="#ffffff" stroke-width="1.3" />
<g transform="translate(26.3,215.6) rotate(45)"><rect x="-3.4" y="-3.4" width="6.8" height="6.8" rx="0.8" fill="none" stroke="#fff" stroke-width="1.3"/></g>
<path d="M20.5 258 H11 V266 H13 V269.5 L16.5 266 H19" fill="none" stroke="#ffffff" stroke-width="1.3" stroke-linecap="round" stroke-linejoin="round" />
<path d="M21 264 H30.5 V270.5 H27.5 L25.5 272.8 L24 270.5 H21 Z" fill="none" stroke="#ffffff" stroke-width="1.3" stroke-linecap="round" stroke-linejoin="round" />
<path d="M26 253 L26.9 255.6 L29.5 256.5 L26.9 257.4 L26 260 L25.1 257.4 L22.5 256.5 L25.1 255.6 Z" fill="#ffffff" />
<path d="M29.5 257.5 L30.1 259.3 L31.8 259.9 L30.1 260.5 L29.5 262.3 L28.9 260.5 L27.2 259.9 L28.9 259.3 Z" fill="#ffffff" />
<path d="M20.6 295 C16.2 295 16.5 296.9 16.5 296.9 V299.5 H21 V300.5 H13.5 C13.5 300.5 10.2 300.1 10.2 305.2 C10.2 310.3 13 310.1 13 310.1 H15 V307.2 C15 307.2 14.9 304.4 17.8 304.4 H23.4 C23.4 304.4 26.1 304.5 26.1 301.8 V297.7 C26.1 297.7 26.5 295 20.6 295 Z" fill="#ffffff" />
<path d="M20.9 315.5 C25.3 315.5 25 313.6 25 313.6 V311 H20.5 V310 H28 C28 310 31.3 310.4 31.3 305.3 C31.3 300.2 28.5 300.4 28.5 300.4 H26.5 V303.3 C26.5 303.3 26.6 306.1 23.7 306.1 H18.1 C18.1 306.1 15.4 306 15.4 308.7 V312.8 C15.4 312.8 15 315.5 20.9 315.5 Z" fill="#ffffff" />
<circle cx="18.4" cy="297.4" r="0.9" fill="#000" stroke="none" stroke-width="1"/>
<circle cx="23.1" cy="313.1" r="0.9" fill="#000" stroke="none" stroke-width="1"/>
<ellipse cx="17.4" cy="342.3" rx="3.5" ry="3.2" fill="none" stroke="#fff" stroke-width="1.5"/>
<ellipse cx="24.7" cy="342.3" rx="3.5" ry="3.2" fill="none" stroke="#fff" stroke-width="1.5"/>
<path d="M28.2 345 Q30.3 346.8 29.6 349.8 Q28.6 353.6 23 353.6 H18.3" fill="none" stroke="#ffffff" stroke-width="1.5" stroke-linecap="round" stroke-linejoin="round" />
<rect x="18.4" y="347" width="1.7" height="2.9" fill="#ffffff" />
<rect x="21.8" y="347" width="1.7" height="2.9" fill="#ffffff" />
<path d="M17.2 355.5 Q13.4 353.5 13.4 348.2 M11 350.6 L13.4 347.7 L15.9 350.2" fill="none" stroke="#ffffff" stroke-width="1.4" stroke-linecap="round" stroke-linejoin="round" />
<circle cx="21.2" cy="389.3" r="10.0" fill="none" stroke="#ffffff" stroke-width="1.5"/>
<path d="M22.6 381.6 L15.7 390.3 H20.4 L18.5 397.1 L26.3 388.2 H21.6 L23.5 381.6 Z" fill="#ffffff" />
<circle cx="21.3" cy="557.6" r="8.8" fill="none" stroke="#ffffff" stroke-width="1.4"/>
<g transform="translate(21.3,553.6) rotate(45)"><rect x="-1.9" y="-1.9" width="3.8" height="3.8" fill="#fff"/></g>
<path d="M16.3 557.8 H26.3 Q26.3 562.8 21.3 562.8 Q16.3 562.8 16.3 557.8 Z" fill="#ffffff" />
<polygon points="19.14,593.28 19.60,591.12 22.40,591.12 22.86,593.28 25.28,594.68 27.38,593.99 28.79,596.43 27.14,597.90 27.14,600.70 28.79,602.17 27.38,604.61 25.28,603.92 22.86,605.32 22.40,607.48 19.60,607.48 19.14,605.32 16.72,603.92 14.62,604.61 13.21,602.17 14.86,600.70 14.86,597.90 13.21,596.43 14.62,593.99 16.72,594.68" fill="none" stroke="#fff" stroke-width="1.5" stroke-linejoin="round"/>
<circle cx="21.0" cy="599.3" r="2.2" fill="none" stroke="#ffffff" stroke-width="1.5"/>
<path d="M10 628.5 L13.5 631.5 L10 635 M18.5 624.8 L15 628 L18.5 631.2" fill="none" stroke="#e8e8e8" stroke-width="1.2" stroke-linecap="round" stroke-linejoin="round" />
<path d="M38.3 634 V626 Q38.3 624.8 39.5 624.8 H46.3 V633.5 H39 Q38.3 633.5 38.3 634.5 Q38.3 635.5 39.2 635.5 H46.3 M39.5 636.5 H41.5" fill="none" stroke="#e8e8e8" stroke-width="1.1" stroke-linecap="round" stroke-linejoin="round" />
<circle cx="132.3" cy="624.9" r="1.6" fill="none" stroke="#e8e8e8" stroke-width="1.0"/>
<circle cx="132.3" cy="635.2" r="1.6" fill="none" stroke="#e8e8e8" stroke-width="1.0"/>
<circle cx="137.8" cy="627.5" r="1.6" fill="none" stroke="#e8e8e8" stroke-width="1.0"/>
<path d="M132.3 626.5 V633.6" fill="none" stroke="#e8e8e8" stroke-width="1.0" stroke-linecap="round" stroke-linejoin="round" />
<circle cx="139.2" cy="633.3" r="3.6" fill="#ffffff" stroke="none" stroke-width="1"/>
<path d="M137.3 633.3 H141.1 M139.2 631.4 V635.2" fill="none" stroke="#000" stroke-width="0.8" stroke-linecap="round" stroke-linejoin="round" />
<path d="M184 633.5 H182.5 Q180.3 633.5 180.3 631 Q180.3 628.6 182.7 628.6 Q183.2 625.6 186.4 625.6 Q189.5 625.6 190 628.6" fill="none" stroke="#e8e8e8" stroke-width="1.1" stroke-linecap="round" stroke-linejoin="round" />
<circle cx="188.3" cy="633" r="3.8" fill="#ffffff" stroke="none" stroke-width="1"/>
<path d="M188.3 635.3 V631 M186.6 632.6 L188.3 630.9 L190 632.6" fill="none" stroke="#000" stroke-width="1.0" stroke-linecap="round" stroke-linejoin="round" />
<circle cx="214.5" cy="630.3" r="6" fill="none" stroke="#e8e8e8" stroke-width="1.1"/>
<path d="M212 627.8 L217 632.8 M217 627.8 L212 632.8" fill="none" stroke="#e8e8e8" stroke-width="1.0" stroke-linecap="round" stroke-linejoin="round" />
<path d="M239 624.8 L245 635.8 H233 Z M239 628.3 V632 M239 633.5 V634" fill="none" stroke="#e8e8e8" stroke-width="1.1" stroke-linecap="round" stroke-linejoin="round" />
<path d="M1061 627.5 Q1061 624.3 1063.8 624.3 H1065.5 Q1066.6 624.3 1066.6 626 Q1066.6 624.3 1067.8 624.3 H1069.6 Q1072.5 624.3 1072.5 627.5 V628.5 Q1074 629.5 1074 631.5 V633 Q1074 636.3 1066.7 636.3 Q1059.3 636.3 1059.3 633 V631.5 Q1059.3 629.5 1061 628.5 Z" fill="#ffffff" stroke="#ffffff" stroke-width="0" stroke-linecap="round" stroke-linejoin="round" />
<rect x="1062.5" y="626" width="3" height="2.5" fill="#000" />
<rect x="1068" y="626" width="3" height="2.5" fill="#000" />
<path d="M1065 631 L1063.8 632.3 L1065 633.6 M1068.4 631 L1069.6 632.3 L1068.4 633.6" fill="none" stroke="#000" stroke-width="0.8" stroke-linecap="round" stroke-linejoin="round" />
<rect x="1089.5" y="628.3" width="5.5" height="4.6" rx="2.3" fill="none" stroke="#e8e8e8" stroke-width="1.1" />
<rect x="1094.2" y="628.3" width="5.5" height="4.6" rx="2.3" fill="none" stroke="#e8e8e8" stroke-width="1.1" />
<rect x="1093" y="629.8" width="3" height="1.6" fill="#000" />
<rect x="1092.5" y="630" width="4.0" height="1.1" fill="#e8e8e8" />
<path d="M1182 633.8 V629.3 Q1182 624.7 1186 624.7 Q1190 624.7 1190 629.3 V633.8 L1191.2 635 H1180.8 Z M1185 636 H1187" fill="none" stroke="#ffffff" stroke-width="1.1" stroke-linecap="round" stroke-linejoin="round" />
<path d="M13.8 652.2 L20.4 651.3 V657.3 H13.8 Z M21.3 651.1 L28.5 650.1 V657.3 H21.3 Z M13.8 658.3 H20.4 V664.3 L13.8 663.4 Z M21.3 658.3 H28.5 V665.5 L21.3 664.5 Z" fill="#ffffff" />
<circle cx="62.1" cy="655.3" r="4.9" fill="none" stroke="#dcdcdc" stroke-width="1.3"/>
<path d="M58.7 658.8 L53 664.3" fill="none" stroke="#dcdcdc" stroke-width="1.4" stroke-linecap="round" stroke-linejoin="round" />
<path d="M253.3 646.3 Q256.156 653.8599999999999 263.5 656.8 Q256.156 659.74 253.3 667.3 Q250.44400000000002 659.74 243.10000000000002 656.8 Q250.44400000000002 653.8599999999999 253.3 646.3 Z" fill="#f4b81c" />
<path d="M253.3 648.5 Q255.54000000000002 654.476 261.3 656.8 Q255.54000000000002 659.1239999999999 253.3 665.0999999999999 Q251.06 659.1239999999999 245.3 656.8 Q251.06 654.476 253.3 648.5 Z" fill="#fcd13a" />
<path d="M273 655.0 Q274.4 658.8159999999999 278 660.3 Q274.4 661.784 273 665.5999999999999 Q271.6 661.784 268 660.3 Q271.6 658.8159999999999 273 655.0 Z" fill="#f6c52a" />
<path d="M236.3 660.7 Q237.364 663.436 240.10000000000002 664.5 Q237.364 665.564 236.3 668.3 Q235.23600000000002 665.564 232.5 664.5 Q235.23600000000002 663.436 236.3 660.7 Z" fill="#2f9be8" />
<circle cx="267.5" cy="649.8" r="2.4" fill="#e0582a" stroke="none" stroke-width="1"/>
<circle cx="284" cy="666.2" r="2.0" fill="#76b236" stroke="none" stroke-width="1"/>
<path d="M309.3 653 V651.5 H319.5 V653 M309.3 662 V663.5 H319.5 V662 M309.3 654.8 H319.5 V660.2 H309.3 Z" fill="none" stroke="#ffffff" stroke-width="1.2" stroke-linecap="round" stroke-linejoin="round" />
<rect x="322.3" y="650.5" width="1.3" height="13.5" fill="#bfbfbf" />
<rect x="321.8" y="654" width="2.4" height="2.6" fill="#ffffff" />
<path d="M353.3 665.8 L354.5 661.5 A9.3 9.3 0 1 1 357.6 664.3 Z" fill="none" stroke="#35c15a" stroke-width="2.0" stroke-linecap="round" stroke-linejoin="round" />
<path d="M357.5 652.5 Q356.3 653.6 356.8 655.6 Q358.2 659.8 363 661.8 Q365 662.4 366 661.2 L366.3 659.8 L364 658.6 L362.8 659.6 Q360 658.4 358.9 655.8 L359.8 654.5 L358.8 652.2 Z" fill="#35c15a" stroke="#35c15a" stroke-width="0.6" stroke-linecap="round" stroke-linejoin="round" />
<circle cx="404" cy="657.7" r="11" fill="#2ea44f"/>
<path d="M404 657.7 L394.47 652.2 A11 11 0 0 1 413.53 652.2 Z" fill="#e0442c"/>
<path d="M404 657.7 L413.53 652.2 A11 11 0 0 1 404 668.7 Z" fill="#f8c22c"/>
<circle cx="404" cy="657.7" r="5" fill="#ffffff" stroke="none" stroke-width="1"/>
<circle cx="404" cy="657.7" r="3.9" fill="#3b7ddd" stroke="none" stroke-width="1"/>
<ellipse cx="447" cy="658.4" rx="10.3" ry="10.6" fill="none" stroke="#b02a55" stroke-width="1.6"/>
<ellipse cx="448.2" cy="658.4" rx="5.6" ry="9.2" fill="none" stroke="#b02a55" stroke-width="1.4"/>
<path d="M484 647.5 L489.8 646.7 L495.6 647.5 L499 651 L498 656 L496.5 662.5 L489.8 668.8 L483.1 662.5 L481.6 656 L480.6 651 Z" fill="#f4501e" />
<path d="M484.3 651.2 L489.8 649.8 L495.3 651.2 L496.3 656 L494.2 661.3 L489.8 664.8 L485.4 661.3 L483.3 656 Z" fill="#fff4ee" />
<path d="M486.5 655.5 L488.3 656.5 M493.1 655.5 L491.3 656.5 M488.3 660 L489.8 661.5 L491.3 660 M489.8 658 V661" fill="none" stroke="#e8603a" stroke-width="0.9" stroke-linecap="round" stroke-linejoin="round" />
<path d="M532.4 648.3 L541.5 652.5 L532.4 656.8 L523.3 652.5 Z" fill="#7ab846" />
<path d="M523.3 652.5 L532.4 656.8 V669 L523.3 664.5 Z" fill="#5e4030" />
<path d="M532.4 656.8 L541.5 652.5 V664.5 L532.4 669 Z" fill="#4a3326" />
<path d="M523.3 652.5 L532.4 656.8 L541.5 652.5 V655 L532.4 659.3 L523.3 655 Z" fill="#5f9a3a" />
<g transform="translate(565.2,647) scale(0.22)"><path fill="#1f9cf0" fill-rule="evenodd" d="M71 3 L97 15 V85 L71 97 L29 59 L12 72 L3 66 V34 L12 28 L29 41 Z M72 29 L47 50 L72 71 Z M12 39 V61 L23 50 Z"/></g>
<path d="M874 660.5 Q880 662.5 884.5 657 Q887 653.5 886.5 649 Q892.5 653 891.5 660 Q890 667.7 881 667.7 Q875 667.5 871 663 Z" fill="#f0a030" />
<circle cx="886.2" cy="652.2" r="5.3" fill="#d8262b" stroke="none" stroke-width="1"/>
<text x="884.03" y="655.80" font-size="8.5" fill="#ffffff" font-weight="700" class="sans" textLength="4.27" lengthAdjust="spacingAndGlyphs" >2</text>
<path d="M981.3 660.8 L986.4 655 L991.5 660.8" fill="none" stroke="#ffffff" stroke-width="1.2" stroke-linecap="round" stroke-linejoin="round" />
<path d="M1004 654.5 H1013.5 V661.3 H1004 Z M1001.5 655.5 V658 M1000.5 657.5 H1003.5 M1002 658 V661" fill="none" stroke="#ffffff" stroke-width="1.1" stroke-linecap="round" stroke-linejoin="round" />
<path d="M1024.5 663.5 A10.5 10.5 0 0 1 1035 653 M1027.2 663.5 A7.8 7.8 0 0 1 1035 655.7 M1030 663.5 A5 5 0 0 1 1035 658.5" fill="none" stroke="#e8e8e8" stroke-width="1.1" stroke-linecap="round" stroke-linejoin="round" />
<circle cx="1034.3" cy="662.8" r="1.2" fill="#ffffff" stroke="none" stroke-width="1"/>
<path d="M1043 655.3 H1045.5 L1049 652 V663 L1045.5 659.7 H1043 Z M1051 655 Q1052.3 657.5 1051 660 M1053 653.3 Q1055 657.5 1053 661.7 M1055 651.8 Q1057.8 657.5 1055 663.2" fill="none" stroke="#ffffff" stroke-width="1.1" stroke-linecap="round" stroke-linejoin="round" />
<path d="M1164 650.3 H1178.2 V660.5 H1168.5 L1166 664.2 V660.5 H1164 Z" fill="#ffffff" />
<path d="M1166.3 653 H1175.8 M1166.3 655.3 H1175.8 M1166.3 657.6 H1172" fill="none" stroke="#1b2230" stroke-width="1.0" stroke-linecap="round" stroke-linejoin="round" />
<circle cx="1175.5" cy="661.8" r="2.5" fill="#1b2230" stroke="none" stroke-width="1"/>
<circle cx="1175.5" cy="661.8" r="1.8" fill="none" stroke="#ffffff" stroke-width="0.8"/>
<rect x="1195" y="640" width="1.2" height="35" fill="#3a4250" />
</svg>
</body></html>
